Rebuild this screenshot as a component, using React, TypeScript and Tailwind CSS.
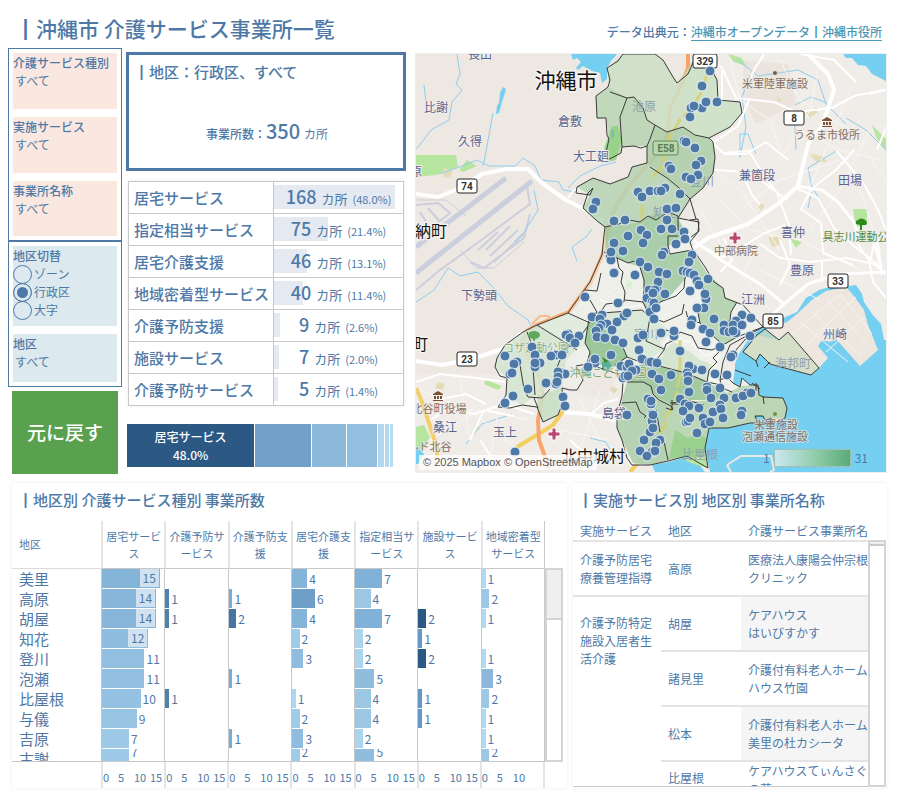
import { Fragment } from "react";

const services = [
  { name: "居宅サービス", count: 168, share: "48.0%", color: "bg-[#2b5983]" },
  { name: "指定相当サービス", count: 75, share: "21.4%", color: "bg-[#709fc8]" },
  { name: "居宅介護支援", count: 46, share: "13.1%", color: "bg-[#8cb8da]" },
  { name: "地域密着型サービス", count: 40, share: "11.4%", color: "bg-[#92bfe0]" },
  { name: "介護予防支援", count: 9, share: "2.6%", color: "bg-[#b3d7ef]" },
  { name: "施設サービス", count: 7, share: "2.0%", color: "bg-[#b5d9f0]" },
  { name: "介護予防サービス", count: 5, share: "1.4%", color: "bg-[#b8dcf2]" },
];

const chartColumns = [
  "居宅サービス",
  "介護予防サービス",
  "介護予防支援",
  "居宅介護支援",
  "指定相当サービス",
  "施設サービス",
  "地域密着型サービス",
];

const chartRows: { area: string; values: number[] }[] = [
  { area: "美里", values: [15, 0, 0, 4, 7, 0, 1] },
  { area: "高原", values: [14, 1, 1, 6, 4, 0, 2] },
  { area: "胡屋", values: [14, 1, 2, 4, 7, 2, 1] },
  { area: "知花", values: [12, 0, 0, 2, 2, 1, 0] },
  { area: "登川", values: [11, 0, 0, 3, 2, 2, 1] },
  { area: "泡瀬", values: [11, 0, 1, 0, 5, 0, 3] },
  { area: "比屋根", values: [10, 1, 0, 1, 4, 1, 2] },
  { area: "与儀", values: [9, 0, 0, 2, 4, 1, 1] },
  { area: "吉原", values: [7, 0, 1, 3, 2, 0, 1] },
  { area: "古謝", values: [7, 0, 0, 2, 5, 0, 2] },
];

// each column has its own colour ramp
const ramps: Record<number, string>[] = [
  { 7: "bg-[#9fcae7]", 9: "bg-[#98c4e4]", 10: "bg-[#95c2e2]", 11: "bg-[#92bfe0]", 12: "bg-[#8fbddf]", 14: "bg-[#88b6da]", 15: "bg-[#85b4d9]" },
  { 1: "bg-[#4e81b0]" },
  { 1: "bg-[#7aadd3]", 2: "bg-[#4674a4]" },
  { 1: "bg-[#b0d6ef]", 2: "bg-[#a0cce8]", 3: "bg-[#90bddf]", 4: "bg-[#85b4d9]", 6: "bg-[#6f9fc9]" },
  { 2: "bg-[#add4ee]", 4: "bg-[#9bc7e5]", 5: "bg-[#90bcde]", 7: "bg-[#82b1d7]" },
  { 1: "bg-[#6498c6]", 2: "bg-[#2b5983]" },
  { 1: "bg-[#b0d9f2]", 2: "bg-[#9dc8e5]", 3: "bg-[#8cb7db]" },
];

const offices = [
  { area: "高原", name: ["医療法人康陽会仲宗根", "クリニック"] },
  { area: "胡屋", name: ["ケアハウス", "はいびすかす"] },
  { area: "諸見里", name: ["介護付有料老人ホーム", "ハウス竹園"] },
  { area: "松本", name: ["介護付有料老人ホーム", "美里の杜カシータ"] },
  { area: "比屋根", name: ["ケアハウスてぃんさぐ", "の花"] },
];

const points = [
  [596, 202], [593, 209], [638, 192], [642, 197], [650, 191], [614, 221], [625, 220], [641, 230], [647, 235], [628, 236],
  [710, 71], [702, 86], [717, 102], [702, 108], [706, 102], [691, 108], [694, 106], [690, 117], [684, 141], [686, 142],
  [695, 148], [701, 161], [696, 165], [669, 166], [671, 169], [698, 175], [686, 177], [691, 179], [680, 194], [665, 188],
  [658, 191], [661, 191], [667, 209], [676, 208], [667, 220], [661, 229], [672, 229], [684, 232], [685, 239], [676, 244],
  [614, 243], [610, 257], [611, 260], [611, 252], [623, 251], [614, 273], [640, 262], [648, 267], [635, 275], [643, 243],
  [585, 297], [618, 303], [649, 290], [647, 298], [652, 302], [653, 306], [650, 312], [654, 319], [624, 316], [627, 313],
  [592, 317], [602, 315], [600, 319], [617, 322], [607, 324], [601, 325], [599, 328], [612, 330], [596, 331], [597, 337],
  [605, 338], [615, 340], [623, 343], [568, 334], [566, 335], [570, 338], [579, 336], [575, 343], [638, 338], [643, 335],
  [639, 350], [611, 355], [593, 361], [595, 363], [595, 359], [588, 367], [532, 347], [535, 355], [505, 356], [517, 362],
  [514, 364], [540, 363], [535, 367], [535, 363], [510, 374], [512, 373], [556, 355], [551, 356], [562, 355], [528, 389],
  [513, 396], [505, 403], [546, 383], [562, 373], [565, 374], [558, 372], [558, 377], [556, 384], [557, 382], [563, 397],
  [565, 406], [515, 452], [621, 366], [627, 367], [629, 364], [636, 370], [632, 371], [623, 378], [625, 376], [628, 376],
  [642, 359], [649, 362], [652, 374], [627, 415], [648, 399], [651, 404], [652, 414], [652, 421], [650, 432], [653, 428],
  [644, 440], [660, 440], [656, 443], [640, 451], [652, 452], [655, 451], [647, 456], [664, 252], [662, 255], [692, 255],
  [689, 262], [659, 272], [667, 274], [683, 271], [687, 272], [690, 273], [694, 275], [657, 288], [658, 282], [708, 279],
  [697, 281], [699, 285], [690, 291], [655, 290], [653, 293], [665, 294], [706, 299], [705, 294], [654, 303], [656, 308],
  [704, 308], [697, 308], [714, 319], [692, 320], [691, 325], [661, 333], [674, 336], [674, 331], [703, 329], [710, 333],
  [706, 342], [720, 347], [742, 315], [751, 318], [736, 321], [724, 325], [733, 325], [742, 325], [724, 331], [729, 332],
  [736, 333], [733, 331], [750, 336], [680, 351], [733, 355], [731, 357], [693, 369], [689, 366], [687, 373], [688, 376],
  [702, 370], [688, 381], [671, 375], [659, 379], [651, 362], [657, 363], [715, 374], [727, 375], [661, 390], [707, 387],
  [707, 390], [720, 388], [689, 392], [680, 399], [711, 398], [724, 398], [736, 398], [747, 393], [743, 396], [751, 393],
  [685, 404], [689, 406], [683, 411], [699, 408], [713, 412], [720, 405], [721, 409], [723, 418], [686, 422], [688, 421],
  [690, 418], [703, 418], [705, 424], [710, 422], [742, 411], [741, 415], [697, 433], [651, 401], [653, 415],
];

const placeNames: { x: number; y: number; text: string; faded?: boolean }[] = [
  { x: 480, y: 59, text: "長山" },
  { x: 436, y: 112, text: "比謝" },
  { x: 470, y: 146, text: "久得" },
  { x: 570, y: 126, text: "倉敷" },
  { x: 591, y: 161, text: "大工廻" },
  { x: 416, y: 176, text: "原" },
  { x: 479, y: 300, text: "下勢頭" },
  { x: 445, y: 432, text: "桑江" },
  { x: 505, y: 437, text: "玉上" },
  { x: 614, y: 418, text: "島袋" },
  { x: 757, y: 180, text: "兼箇段" },
  { x: 850, y: 185, text: "田場" },
  { x: 793, y: 237, text: "喜仲" },
  { x: 802, y: 275, text: "豊原" },
  { x: 753, y: 304, text: "江洲" },
  { x: 835, y: 339, text: "州崎" },
  { x: 644, y: 111, text: "池原", faded: true },
  { x: 702, y: 186, text: "登川", faded: true },
  { x: 665, y: 217, text: "知花", faded: true },
  { x: 646, y: 339, text: "室川", faded: true },
  { x: 793, y: 368, text: "海邦町", faded: true },
  { x: 700, y: 459, text: "比屋根", faded: true },
];

const poiNames = [
  { x: 775, y: 88, text: "米軍陸軍施設", color: "#866e63" },
  { x: 827, y: 139, text: "うるま市役所", color: "#866e63" },
  { x: 736, y: 255, text: "中部病院", color: "#866e63" },
  { x: 439, y: 413, text: "北谷町役場", color: "#866e63" },
  { x: 424, y: 451, text: "ールド北谷", color: "#866e63" },
  { x: 776, y: 429, text: "米軍施設", color: "#866e63" },
  { x: 775, y: 441, text: "泡瀬通信施設", color: "#866e63" },
  { x: 861, y: 241, text: "具志川運動公園", color: "#4f8a3f" },
  { x: 536, y: 352, text: "コザ運動公園", color: "#86b283" },
  { x: 608, y: 377, text: "沖縄こどもの国", color: "#76a672" },
];

const shields = [
  { x: 705, y: 61, text: "329" },
  { x: 794, y: 118, text: "8" },
  { x: 467, y: 186, text: "74" },
  { x: 467, y: 359, text: "23" },
  { x: 838, y: 281, text: "33" },
  { x: 773, y: 321, text: "85" },
];

const streets = [
  "M702 54l20 14 14 30 38 4 22 10 36-4 22-12 30 -6 18 4 5 12-18 14-12 30",
  "M750 98l-12 28-30 20-14-6M709 139l14 14 26-2 16 26 12 16 12 32 2 30",
  "M715 170l30 2 18 10 24 18M788 160l-22 -18-20 12-22 0M796 188l22 10 16 30 20 18 28 22",
  "M813 187l-12 22 20 14 2 30 30 12M836 150l28 34 14 26 8 20M854 150l-18 20-26 20",
  "M822 262l0 20M780 285l10-20-10-25M855 240l14 20 4 22 13 16M760 205l-8 -10-12 -26",
  "M703 247l20 10 22-12 20-12 20-8M720 272l12-12 -8-22",
  "M760 244l20 14 30 4 36-4 28 6 12 10M870 262l4 -18 6 20",
  "M870 94l16 -4M764 54l-10 16-8 20M800 54l34 6 22 22M722 70l0 30",
  "M416 382l24-8 36 4 30 4M430 420l20-12 24 6 30-10 30 10M470 440l14-30 30 6",
  "M590 415l14-12 14-4M436 400l30 -6 20 10M480 440l20 30M570 440l22 20 24 2",
  "M600 300l22 8 30-4 20-30M600 350l40 -10 20 16 40 6 20 24",
  "M660 350l10-14 20 6 16 14 12-6M722 345l-10 30M620 430l50 -6 20 12",
];

// fine grid of back streets
const lanes = [
  "M730 60l10 40 30 20 10 30M690 150l50 40 40 60M780 60l20 40 50 30 36 50M820 60l-10 50-30 50",
  "M740 210l40-30 60-20M720 200l30 30 50 10 60 30M850 90l-20 50-30 70M870 130l-30 60-30 40",
  "M700 210l30 50 40 50M760 270l60 30M800 130l40 20 40 10M860 190l20 60M740 280l20-40",
  "M420 390l50 20 60 50M430 440l50-30 50 10M460 380l10 60M500 400l-10 60M440 390l-10 60M416 410l60 0",
  "M580 400l20 40M600 390l-20 60M560 430l50 10M610 270l30 30M612 290l28-14M660 320l40-24M668 300l20 24",
];

const streams = [
  "M457 54l3 20-4 10 6 6-10 12-3 18-18 10-12 16-9 8",
  "M424 85l2 18 8 8",
  "M493 113l-8 44-2 9",
  "M439 174l18-6 20-8 12 6 26 0 8-8 12 8 6 14 18 2 4 8 12 2",
  "M534 190l4 20-14 22-10 10M568 188l12-12 20-10 16-4",
  "M416 302l18-12 14-22 12 8 18-4 14 14 16 20 20 14 12 22",
  "M577 261l-5-14 14-10 6-8",
  "M738 60l20 16 40-6 20 10 8 24 20 20",
  "M750 75l-8 22 4 30-6 30M740 158l0-24 8 0 8 20",
  "M795 105l16-8 16 6M846 118l20 12 20 20M794 110l2 40",
  "M808 208l4-20-4-20 20-12 10 -6M824 208l-12-22",
  "M466 444l16-20 30-10M590 438l16 4 10 20",
];

const greens = [
  "M416 155l40 0 2 12-22 8-20 2z",
  "M459 170l8-10 10 6-14 6z",
  "M728 54l14 4 4 8-12-4z",
  "M872 125l14 14 0 12-10-14z",
  "M486 380l16 6-4 4-14-6z",
  "M853 209l15 0-2 16-10 2z",
  "M416 427l8-2 6 12-6 12-8 0z",
  "M627 280l6 2-3 8-5-2z",
  "M790 238l12 4-6 6z",
];

const sandy = [
  "M443 167l9 4-1 7-8-1z",
  "M806 112l10-5 2 5-8 6z",
  "M776 97l6 2-4 4z",
  "M768 237l10 0 2 8-8 2z",
  "M810 154l12 2 6 6-12 0z",
  "M438 382l7 2-2 6-8-2z",
  "M474 424l6 4-4 4z",
  "M612 386l6 3-4 5-4-4z",
  "M757 203l8 2-4 6z",
];

const cityOutline =
  "M623 54L618 61 607 68 610 80 608 87 596 96 597 118 606 118 607 135 609 139 604 162 621 153 622 147 634 146 641 148 647 146 647 163 632 167 628 177 610 184 593 178 577 187 576 193 590 195 593 188 588 193 583 208 596 220 605 227 604 235 602 255 590 282 568 313 537 325 523 332 505 345 497 358 495 367 500 376 507 378 506 395 498 407 510 408 522 405 537 407 543 422 558 415 563 402 562 388 570 390 577 390 583 380 576 366 587 364 603 369 618 374 623 382 622 396 617 415 617 428 622 440 627 458 632 465 650 465 668 461 687 456 708 468 705 448 709 428 728 428 750 423 773 423 785 418 787 408 783 398 763 397 759 395 758 385 750 385 742 378 740 387 733 383 727 377 720 380 723 362 730 345 750 334 763 327 743 305 725 298 723 288 714 282 705 267 692 248 690 242 698 232 699 222 688 220 678 218 690 199 703 188 713 173 715 157 713 142 709 138 730 127 742 113 740 102 718 100 717 80 705 58 695 58 688 74 677 83 673 77 663 60 655 54z";

// choropleth areas, darker = more offices
const areas = [
  { d: "M623 54L607 68 610 92 627 98 634 97 643 108 647 120 655 125 667 132 683 127 695 135 709 138 730 127 742 113 740 102 718 100 717 80 705 58 695 58 677 83 663 60 655 54z", fill: "#c4dcbc" },
  { d: "M608 87L596 96 597 118 606 118 609 139 604 162 621 153 622 147 620 117 627 98z", fill: "#aed0a7" },
  { d: "M627 98L620 117 622 147 634 146 647 146 655 125 647 120 643 108 634 97z", fill: "#abcca4" },
  { d: "M655 125L647 146 647 163 667 178 678 187 690 199 703 188 713 173 715 157 713 142 709 138 695 135 683 127 667 132z", fill: "#9cc499" },
  { d: "M647 163L632 167 628 177 610 184 593 178 577 187 590 195 583 208 605 227 622 224 640 222 655 212 678 218 690 199 678 187z", fill: "#aacda6" },
  { d: "M605 227L606 252 617 258 628 263 640 267 644 280 643 302 650 317 660 302 670 296 687 277 692 250 670 254 668 246 684 240 690 242 678 218 655 212 640 222z", fill: "#8dc08e" },
  { d: "M692 250L687 275 703 287 705 300 698 313 700 323 710 333 723 345 737 337 727 327 732 310 737 302 725 297 723 288 707 273z", fill: "#a0c79b" },
  { d: "M537 325L523 332 505 345 497 358 495 367 507 378 506 395 522 405 537 395 548 388 562 388 566 360 580 346z", fill: "#cde2ca" },
  { d: "M537 325L568 313 590 325 588 345 570 350z", fill: "#dcebda" },
  { d: "M590 313L585 343 590 352 587 363 615 367 627 357 623 347 603 327 602 313z", fill: "#79b67a" },
  { d: "M602 313L643 310 652 318 672 332 660 342 664 350 643 363 627 357 623 347 603 327z", fill: "#d3e5d0" },
  { d: "M664 350L674 342 690 352 700 360 712 365 707 382 687 373 643 363 662 357z", fill: "#cbe0c5" },
  { d: "M643 363L687 373 707 382 727 393 715 400 690 400 670 403 657 397 643 382 627 382 623 378 635 368z", fill: "#84b983" },
  { d: "M627 382L643 382 657 397 670 403 663 437 668 460 650 465 633 463 622 440 617 427 622 400z", fill: "#9cc69a" },
  { d: "M670 403L715 400 727 393 742 386 758 385 759 395 783 398 787 408 785 418 750 423 728 428 709 428 705 448 708 468 687 455 668 460 663 437z", fill: "#a5cb9d" },
  { d: "M779 340L788 332 819 368 811 375 770 364 760 354 756 361 743 352 757 335 765 329z", fill: "#cadcbd" },
  { d: "M537 395L537 407 543 422 558 415 563 402 562 388z", fill: "#bfdab9" },
];

const borders = [
  "M610 92l17 6 7-1 9 11 4 12 8 5 12 7 16-5 12 8 14 3",
  "M627 98l-7 19 2 30M655 125l-5 14-3 7M650 167l17 11 11 9 12 12",
  "M605 227l14-3 10-4 11 2 8 -6 8 4 12-8 10 4 0 14 10 2",
  "M604 252l13 6 11 5 6 -2 6 6 4 13 0 10 -1 12 7 15",
  "M617 258l2 10 4 4-2 10 4 10-1 10-18 2-4 6M643 302l-18-2M668 246l2 8 22-4M668 246l0 -10 10 0",
  "M585 290l12 1 4-18M568 313l22 10M590 300l8 14",
  "M590 313l12 0 40-3 8 7M590 313l-5 30 5 9-3 11M602 313l4 12 16 20 5 12-12 8",
  "M650 317l10-15 16-6 8-8 1-10 4-5M652 318l12 4 18-8 2-10",
  "M687 275l16 12 2 13-7 13 2 10 10 10 13 12 14-8 26-10M737 302l-6 10 -1 8-6 10 6 6M700 323l-12-4-2-8",
  "M650 317l-4 24 18 8M664 350l2-6 8-4 6 -8 12 4 6 12 14 2 8 -4M672 332l-6 -2",
  "M664 350l-6 8-14 4 42 11 21 9M707 382l2-12 8-8 -4-4 8 -8M643 363l-16-6",
  "M707 382l14 3M707 382l-2 10 10 8M670 403l20 -2 14 4 M720 380l2 8 10 4",
  "M627 382l16 0 8 4 2 8 6 6 12 6 2 4M623 378l12-10M672 400l0 10-6-2M672 404l10 0",
  "M622 403l14-1 4 10 6 4 -2 2M656 410l4 22M663 437l5 23",
  "M506 374l8-10M520 365l4 24 4 8 14 1 8-9M534 398l4 10M556 370l8-20 12-8 12-16",
  "M527 332l10 26-4 10 2 27M537 325l40 25M750 334l-14 16-6 10",
  "M735 370l16 6M752 383l8 6M756 383l0 8M763 396l1 8M764 368l6-6M756 361l2 6",
  "M690 199l6 20M690 220l8-1 1 12-8 6",
];

function ServiceMap() {
  return (
    <svg
      viewBox="416 54 470 418"
      preserveAspectRatio="xMidYMid slice"
      className="block h-full w-full font-['Roboto','Noto_Sans_CJK_JP',sans-serif]"
      role="img"
      aria-label="沖縄市 事業所マップ"
    >
      <rect x="416" y="54" width="470" height="418" fill="#ede8e1" />
      <path d="M690 54h196v418H416V375l60-2 40 6 90 20 90-200z" fill="#f0ece7" />
      <path d="M744 60l44 4 8 40-40 20-14-30z" fill="#ebe4dc" />

      {/* air base */}
      <g fill="none" stroke="#cbcedd">
        <path d="M416 247l90-69M416 273l116-92" strokeWidth="5" />
        <path d="M416 205l22-2 12 10-20 16M420 212l10 16M428 208l12 14M416 290l24-20 36-26 54-40-3-18M470 262l14 6 40-30 6-24M486 250l24-24M490 256l28-26M494 262l30-28M478 250l20-18" strokeWidth="2" />
        <path d="M416 200l30 0 20 16M460 250l16 18 18 0 30-26" strokeWidth="1" />
      </g>

      {greens.map((d) => (
        <path key={d} d={d} fill="#b5e59e" />
      ))}
      {sandy.map((d) => (
        <path key={d} d={d} fill="#e4dcb6" />
      ))}

      <g fill="none" stroke="#8fcdf0" strokeWidth="1">
        {streams.map((d) => (
          <path key={d} d={d} />
        ))}
      </g>

      {/* reservoirs and sea */}
      <g fill="#75cff0">
        <path d="M571 54l2 6 4-2 4 4-5 6 2 2 5-4 9 5 8 2 2 10 5-4 0-11 4-7 6-7z" />
        <path d="M503 87l3 2-2 7-2 6-3 11-3 1 1-8 2-3 1-10z" />
        <path d="M843 54l3 4 6 0 6 7 8 1 6 8 14 7V54z" />
        <path d="M735 364l4-10 10-16 14-12 20-8 14-6 9-14 13-8 14-4 9-3 8 3 6-1 6 9 2 8 8 12 9 10 3 16 2 0V472H710l-5-24 4-20 19 0 22-5 23 0 12-5 2-10-4-10-20-1-4-2-1-10-8 0-8-7-2 9-7-4 2-15z" />
        <path d="M652 465l16-3 19-5 10 5 8 10h-50zM416 446l8 8-6 10-2 0z" />
      </g>
      <path d="M779 340L765 329 787 322 797 314 812 300 826 291 846 287 854 296 864 310 868 325 878 350 860 366 844 348 836 339 830 342 822 340 818 346 828 358 819 368 811 375 770 364 760 354 756 361 743 352 757 335z" fill="#eee7e0" />
      <path d="M800 322l48 40M812 312l50 44M826 300l44 46M840 294l32 40M790 336l50-42M806 345l50-48M826 352l38-34" stroke="#f7f3ef" strokeWidth="1" fill="none" />
      <path d="M727 465l14-9 30 0 3 14-4 2M727 465l4 7" stroke="#ece7e1" strokeWidth="2" fill="none" />

      {/* roads */}
      <g fill="none" stroke="#f9f7f5" strokeWidth="1">
        {lanes.map((d) => (
          <path key={d} d={d} />
        ))}
      </g>
      <g fill="none" stroke="#fff" strokeLinejoin="round">
        {streets.map((d) => (
          <path key={d} d={d} strokeWidth="2" />
        ))}
        <path d="M416 194l22 3 20-8 24-15 24-5 22 0 14 14 24 17 24 12 14 10" strokeWidth="4" />
        <path d="M568 198l6-8 12-4" strokeWidth="2" />
        <path d="M416 361l26 4 30-6 30-10 20-16" strokeWidth="4" />
        <path d="M808 54l20 20 6 16-12 36-14 18-10 42-20 18-30 20-40 14-20 14" strokeWidth="4" />
        <path d="M690 238l34 24 36 22 24 20-22 20M784 304l24-20 30-10 48-2M796 186l26 4 16 12 16 20 6 20M876 235l6 40" strokeWidth="3" />
        <path d="M560 412l30 2 32 8" strokeWidth="4" />
        <path d="M600 285l26 20 20 40 30 20 40 16M700 280l20 40-10 40" strokeWidth="1" />
      </g>
      <g fill="none" strokeLinejoin="round">
        <path d="M416 388l6 14 8 24 7 22 0 10" stroke="#f2cf6b" strokeWidth="4" />
        <path d="M563 411l-10 14-16 10-20 12M630 472l12-14" stroke="#f2cf5f" strokeWidth="4" />
        <path d="M688 54l0 14-10 24-8 16-2 24-5 14-18 22-18 20-12 20-6 16-3 14-3 16-12 28-22 30-32 13" stroke="#f9a262" strokeWidth="4" />
        <path d="M537 325l-10 6-4 10 4 14 14 25 2 16-5 24 1 20 10 28" stroke="#f9a56b" strokeWidth="4" />
        <path d="M532 324l8-8 8 0 6 6" stroke="#f9b98b" strokeWidth="2" />
      </g>

      {/* city */}
      <path d={cityOutline} fill="#eef3ec" fillOpacity="0.6" />
      {areas.map((area) => (
        <path key={area.d} d={area.d} fill={area.fill} fillOpacity="0.7" />
      ))}
      <path d="M612 126l6 0 4 14-6 20-8 2-4-14z" fill="#8fd07f" fillOpacity="0.8" />
      <path d="M611 130l3 0 0 8-3 0z" fill="#75bfc0" />
      <path d="M675 430l13 8 12-4 6 4-2 19-16 0-19 2z" fill="#93cf86" fillOpacity="0.8" />
      <path d="M684 460l20-6 3 14-14-4z" fill="#b5e59e" />
      <path d="M602 362l6-2 4 6-4 6-6-2z" fill="#5fae9a" />
      <path d="M706 76l-2 12-12 20-12 12-10 16-8 30-12 14M642 205l0 18M680 340l0 36-4 18-2 12-8 10-1 10-8 10" stroke="#d5cf6a" strokeWidth="3" fill="none" strokeDasharray="14 3" strokeOpacity="0.8" />
      <path d="M755 416l8 0 2 4 6-2 2 4-8 2-8-3z" fill="#75cff0" stroke="#333" />
      <g fill="none" stroke="#3a3a3a" strokeWidth="1" strokeLinejoin="round">
        <path d={cityOutline} />
        {borders.map((d) => (
          <path key={d} d={d} />
        ))}
        <path d="M779 340L788 332 819 368 811 375 770 364 760 354 756 361 743 352 757 335 765 329z" />
      </g>

      {/* labels */}
      <g textAnchor="middle" fontSize="12" strokeWidth="2" paintOrder="stroke" strokeLinejoin="round">
        {placeNames.map((p) => (
          <text key={p.text} x={p.x} y={p.y} fill={p.faded ? "#8f9fae" : "#5b6392"} stroke={p.faded ? "none" : "#f2efea"}>
            {p.text}
          </text>
        ))}
      </g>
      <g textAnchor="middle" fontSize="11" strokeWidth="2" paintOrder="stroke" strokeLinejoin="round">
        {poiNames.map((p) => (
          <text key={p.text} x={p.x} y={p.y} fill={p.color} stroke="#f2efea" strokeOpacity="0.6">
            {p.text}
          </text>
        ))}
      </g>
      <g textAnchor="middle" fill="#111" stroke="#f6f3ef" strokeWidth="3" paintOrder="stroke" strokeLinejoin="round">
        <text x="566" y="88" fontSize="21">沖縄市</text>
        <text x="415" y="237" fontSize="16">嘉手納町</text>
        <text x="420" y="350" fontSize="16">町</text>
        <text x="593" y="462" fontSize="16">北中城村</text>
      </g>

      {/* poi symbols */}
      <circle cx="775" cy="73" r="2" fill="#7d5b46" />
      <circle cx="775" cy="414" r="2" fill="#7c8a55" />
      {[[827, 122], [438, 396]].map(([x, y]) => (
        <path key={x} transform={`translate(${x} ${y})`} d="M-5-2L0-5 5-2V-1H-5zM-4 0h2v3h-2zM-1 0h2v3h-2zM2 0h2v3h-2zM-5 4h10v1h-10z" fill="#7d4f33" />
      ))}
      {[[735, 238], [554, 434]].map(([x, y]) => (
        <path key={x} transform={`translate(${x} ${y})`} d="M-2-6h4v4h4v4h-4v4h-4v-4h-4v-4h4z" fill="#b9496f" stroke="#fff" />
      ))}
      <path d="M856 224a3 3 0 0 1 2-4 4 3 0 0 1 7 0 3 3 0 0 1 1 5h-4v5h-2v-5z" fill="#2f8a1e" />
      <ellipse cx="534" cy="335" rx="6" ry="4" fill="#5fa75d" />
      <path d="M533 335h2v6h-2z" fill="#5fa75d" />
      <path d="M602 357l6 4-3 2z" fill="#2f8a1e" />

      {shields.map((s) => (
        <g key={s.text}>
          <rect x={s.text === "329" ? s.x - 12 : s.x - 10} y={s.y - 7} width={s.text === "329" ? 24 : 20} height="14" rx="2" fill="#fff" stroke="#222" />
          <text x={s.x} y={s.y + 4} textAnchor="middle" fontSize="10" fontWeight="700" fill="#333">
            {s.text}
          </text>
        </g>
      ))}
      <rect x="653" y="141" width="25" height="14" rx="2" fill="#b9d6ae" stroke="#5f8f57" />
      <text x="666" y="152" textAnchor="middle" fontSize="10" fontWeight="700" fill="#557a50">E58</text>

      <g fill="#4e79a7" stroke="#e8f0f7" strokeWidth="1">
        {points.map(([x, y]) => (
          <circle key={`${x}-${y}`} cx={x} cy={y} r="5" />
        ))}
      </g>
    </svg>
  );
}

function Filter({ id, label, tone }: { id: string; label: string; tone: string }) {
  return (
    <div className={`pt-px ${tone}`}>
      <label htmlFor={id} className="block text-xs leading-[18px] font-medium">
        {label}
      </label>
      <select id={id} className="block h-[18px] w-full appearance-none bg-transparent pl-0.5 text-xs leading-[18px]">
        <option>すべて</option>
      </select>
    </div>
  );
}

function Sidebar() {
  return (
    <aside className="w-[114px] shrink-0">
      <div className="space-y-2 border border-[#4e79a7] p-1">
        <Filter id="kind" label="介護サービス種別" tone="h-14 bg-[#fae7e0]" />
        <Filter id="service" label="実施サービス" tone="h-14 bg-[#fae7e0]" />
        <Filter id="office" label="事業所名称" tone="h-[55px] bg-[#fae7e0]" />
      </div>
      <div className="space-y-2 border border-[#4e79a7] p-1">
        <fieldset className="h-20 bg-[#dce9ee] pt-px">
          <legend className="float-left w-full text-xs leading-[18px] font-medium">地区切替</legend>
          {["ゾーン", "行政区", "大字"].map((mode) => (
            <label key={mode} className="flex h-[18px] w-full items-center gap-0.5 text-xs">
              <input
                type="radio"
                name="mode"
                defaultChecked={mode === "行政区"}
                className="size-[19px] shrink-0 appearance-none rounded-full border border-[#4e79a7] checked:bg-[#4e79a7] checked:shadow-[inset_0_0_0_3px_#dce9ee]"
              />
              {mode}
            </label>
          ))}
        </fieldset>
        <Filter id="area" label="地区" tone="h-12 bg-[#dce9ee]" />
      </div>
      <button type="button" className="mt-1 ml-1 block h-[83px] w-[106px] bg-[#59a14f] text-[19px] font-medium text-white">
        元に戻す
      </button>
    </aside>
  );
}

function Summary() {
  return (
    <section className="ml-1 w-[280px] shrink-0 pt-1">
      <div className="h-[119px] border-[3px] border-[#4e79a7]">
        <h2 className="pt-[5px] pl-[5px] text-[15px] leading-6 font-medium">┃地区：行政区、すべて</h2>
        <p className="mt-[33px] pl-0.5 text-center text-xs leading-7">
          <span className="font-medium">事業所数：</span>
          <span className="text-xl font-medium">350</span>
          <span className="ml-1">カ所</span>
        </p>
      </div>
      <table className="mt-[10px] ml-0.5 w-[276px] table-fixed border-collapse shadow-[0_0_4px_#00000014]">
        <tbody>
          {services.map((s) => (
            <tr key={s.name} className="h-8 border border-[#c8c8c8]">
              <th scope="row" className="w-[145px] border-r border-[#c8c8c8] pl-[5px] text-left text-[15px] leading-6 font-medium whitespace-nowrap">
                {s.name}
              </th>
              <td className="relative text-center leading-6 whitespace-nowrap">
                <span className="absolute top-[3px] left-0 h-6 bg-[#e5eaf2]" style={{ width: `${(s.count / 168) * 94}%` }} />
                <span className="relative text-lg leading-6 font-medium">{s.count}</span>
                <span className="relative ml-[5px] text-[13px]">カ所</span>
                <span className="relative ml-[5px] text-[11px]">({s.share})</span>
              </td>
            </tr>
          ))}
        </tbody>
      </table>
      <div className="mt-[18px] ml-px flex h-[43px] w-[267px]">
        {services.map((s, i) => (
          <div
            key={s.name}
            className={`flex flex-col justify-center border-r border-white text-center text-xs leading-[18px] font-medium text-white ${s.color}`}
            style={{ width: `${(s.count / 350) * 100}%` }}
          >
            {i === 0 && (
              <>
                <span>{s.name}</span>
                <span>{s.share}</span>
              </>
            )}
          </div>
        ))}
      </div>
    </section>
  );
}

function ChartCell({ value, color, clipped }: { value: number; color: string; clipped: boolean }) {
  if (!value) return null;
  const inside = value >= 12;
  return (
    <div className={`flex text-xs ${clipped ? "h-3 overflow-hidden leading-[6px]" : "h-[19px] leading-[19px]"}`}>
      <div className={`shrink-0 ${inside ? "flex justify-end pr-px pb-px" : ""} ${color}`} style={{ width: `${value * 6.2}%` }}>
        {inside && <span className="bg-[#d0e1ef] px-[3px] leading-[18px]">{value}</span>}
      </div>
      {!inside && <span className="ml-0.5">{value}</span>}
    </div>
  );
}

function AreaChart() {
  return (
    <section className="min-w-0 shadow-[0_0_3px_#00000014]">
      <h2 className="pt-[5px] pl-[6px] text-[15px] leading-6 font-medium">┃地区別 介護サービス種別 事業所数</h2>
      <div className="mt-[9px] flex">
        <div className="min-w-0 flex-1">
          <div className="h-[241px] overflow-hidden border-b border-[#c8c8c8]">
            <table className="w-full table-fixed border-separate border-spacing-0 border-r border-[#c8c8c8]">
              <thead>
                <tr className="h-12">
                  <th className="w-[89px] border-b border-[#dcdcdc] pl-[7px] text-left text-[11px] font-normal">地区</th>
                  {chartColumns.map((name) => (
                    <th key={name} className="border-b border-l-2 border-b-[#c8c8c8] border-l-[#e4e4e4] px-0.5 text-[11px] leading-[17px] font-normal">
                      {name}
                    </th>
                  ))}
                </tr>
              </thead>
              <tbody>
                {chartRows.map((row, r) => (
                  <tr key={row.area} className="h-5">
                    <th scope="row" className="p-0 pl-[7px] text-left text-[15px] leading-5 font-normal">{row.area}</th>
                    {row.values.map((value, c) => (
                      <td key={chartColumns[c]} className="border-l border-[#c8c8c8] p-0 align-top">
                        <ChartCell value={value} color={ramps[c][value]} clipped={r === chartRows.length - 1} />
                      </td>
                    ))}
                  </tr>
                ))}
              </tbody>
            </table>
          </div>
          <div className="grid h-[26px] grid-cols-[89px_repeat(7,minmax(0,1fr))] border-r-2 border-[#e4e4e4] text-[11px]">
            <span />
            {chartColumns.map((name, c) => (
              <div key={name} className="grid grid-cols-[15px_16px_16px_1fr] items-center border-l-2 border-[#e4e4e4] pt-1">
                <span>0</span>
                <span>5</span>
                <span>10</span>
                {c < 6 && <span>15</span>}
              </div>
            ))}
          </div>
        </div>
        <div className="mt-[47px] mr-1 h-[194px] w-[18px] border-2 border-[#d4d4d4]">
          <div className="h-[50px] border-b-2 border-[#d4d4d4] bg-[#efefef]" />
        </div>
      </div>
    </section>
  );
}

function OfficeTable() {
  return (
    <section className="min-w-0 shadow-[0_0_3px_#00000014]">
      <h2 className="pt-[5px] pl-[5px] text-[15px] leading-6 font-medium">┃実施サービス別 地区別 事業所名称</h2>
      <div className="mt-[9px] flex h-[266px]">
        <div className="min-w-0 flex-1 overflow-hidden border-b border-[#c8c8c8]">
          <table className="w-full table-fixed border-separate border-spacing-0 text-left text-xs leading-[18px]">
            <thead>
              <tr className="h-[21px]">
                <th className="w-[88px] border-b-2 border-[#e4e4e4] p-0 pl-[7px] font-normal">実施サービス</th>
                <th className="w-20 border-b-2 border-[#e4e4e4] p-0 pl-[7px] font-normal">地区</th>
                <th className="border-b-2 border-[#e4e4e4] p-0 pl-[7px] font-normal whitespace-nowrap">介護サービス事業所名</th>
              </tr>
            </thead>
            <tbody>
              {offices.map((office, i) => (
                <tr key={office.area} className={i === 4 ? "h-[37px]" : "h-[55px]"}>
                  {i === 0 && <td className="border-b-2 border-[#e4e4e4] p-0 pl-[7px]">介護予防居宅療養管理指導</td>}
                  {i === 1 && (
                    <td rowSpan={4} className="p-0 pt-[17px] pr-1 pl-[7px] align-top">
                      介護予防特定施設入居者生活介護
                    </td>
                  )}
                  <td className={`border-b-2 border-[#e4e4e4] p-0 pl-[7px] ${i === 4 ? "pb-1" : ""}`}>{office.area}</td>
                  <td className={`border-b-2 border-[#e4e4e4] p-0 pl-[7px] whitespace-nowrap ${i % 2 ? "bg-[#f5f5f5]" : ""}`}>
                    {office.name.map((line, n) => (
                      <Fragment key={line}>
                        {n > 0 && <br />}
                        {line}
                      </Fragment>
                    ))}
                  </td>
                </tr>
              ))}
            </tbody>
          </table>
        </div>
        <div className="mt-[19px] mr-px w-[18px] border-2 border-[#d4d4d4]">
          <div className="h-1 border-b-2 border-[#c8c8c8] bg-[#efefef]" />
        </div>
      </div>
    </section>
  );
}

export default function App() {
  return (
    <main className="bg-white pr-3 pb-3 pl-2 font-['Noto_Sans_CJK_JP',sans-serif] text-[#4e79a7]">
      <header className="flex h-12 items-center justify-between pt-2.5 pr-[5px] pl-[7px]">
        <h1 className="text-[21px] font-medium">┃沖縄市 介護サービス事業所一覧</h1>
        <p className="pt-1.5 text-xs font-medium">
          データ出典元：
          <a href="#opendata" className="border-b border-[#499bb5] text-[#4996b2]">
            沖縄市オープンデータ┃沖縄市役所
          </a>
        </p>
      </header>
      <div className="flex">
        <Sidebar />
        <Summary />
        <section className="relative mt-[5px] ml-[9px] h-[420px] min-w-0 flex-1 border border-[#eeeeee]">
          <ServiceMap />
          <p className="absolute bottom-0.5 left-[3px] bg-white/75 px-1 font-['Liberation_Sans',Arial,sans-serif] text-[11px] leading-[15px] text-[#555]">
            © 2025 Mapbox © OpenStreetMap
          </p>
          <div className="absolute right-[18px] bottom-[5px] flex items-center gap-1 text-xs">
            <span>1</span>
            <div className="h-[18px] w-[77px] border border-[#a0bfae] bg-linear-to-r from-[#cbe7f2] via-[#94cfae] to-[#5aab78]" />
            <span>31</span>
          </div>
        </section>
      </div>
      <div className="mt-[9px] ml-1 grid grid-cols-[555fr_314fr] gap-1.5">
        <AreaChart />
        <OfficeTable />
      </div>
    </main>
  );
}
